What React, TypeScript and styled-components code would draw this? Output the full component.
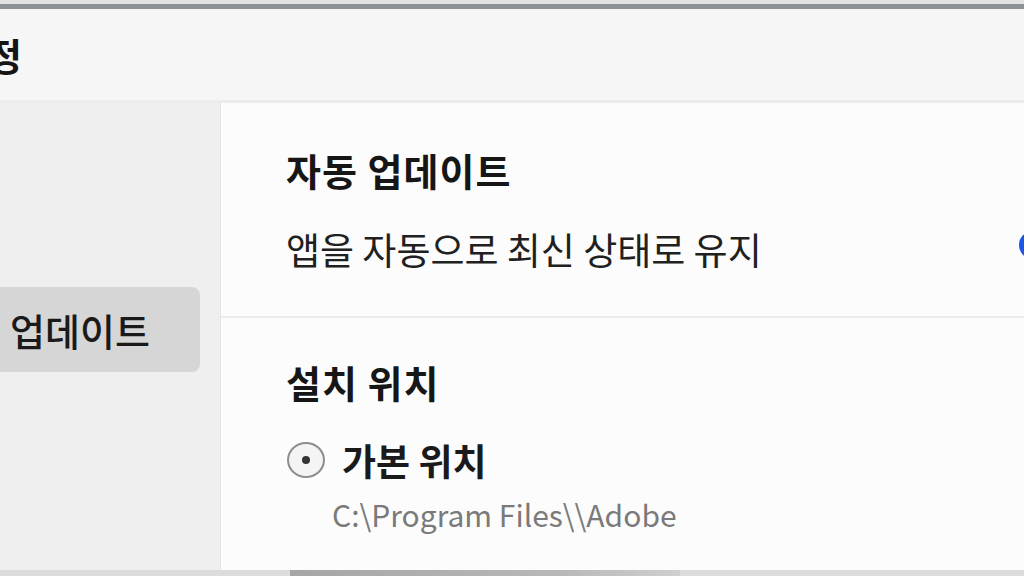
import React from "react"
import styled, { createGlobalStyle } from "styled-components"

const FONT = `"Noto Sans CJK KR", "Noto Sans", sans-serif`

const GlobalStyle = createGlobalStyle`
  html, body {
    margin: 0;
    padding: 0;
    width: 1024px;
    height: 576px;
    overflow: hidden;
    background: #e6e6e6;
  }
  body {
    font-family: ${FONT};
    color: #1c1c1c;
  }
`

const StyledWindow = styled.div`
  display: flex;
  flex-direction: column;
  width: 1193px;
  height: 576px;
  margin-left: -80px;
  background: #fcfcfc;
`

const StyledTopEdge = styled.div`
  height: 4px;
  background: #e2e3e4;
  border-bottom: 5px solid #8c9296;
`

const StyledTitleBar = styled.div`
  display: flex;
  align-items: center;
  height: 91px;
  padding-left: 32px;
  background: #f6f6f6;
  border-bottom: 3px solid #ececec;
`

const StyledTitle = styled.h1`
  margin: 0;
  font-size: 38px;
  font-weight: 700;
  line-height: 44px;
  color: #151515;
`

const StyledBody = styled.div`
  display: flex;
  flex: 1;
  min-height: 0;
`

const StyledSidebar = styled.nav`
  width: 300px;
  padding-top: 184px;
  background: #efefef;
  border-right: 1px solid #e4e4e4;
`

const StyledNavItem = styled.div<{ $active?: boolean }>`
  display: flex;
  align-items: center;
  width: 264px;
  height: 85px;
  margin-left: 16px;
  padding-left: 74px;
  box-sizing: border-box;
  border-radius: 8px;
  background: ${({ $active }) => ($active ? "#d6d6d6" : "transparent")};
  font-size: 38px;
  font-weight: 500;
  color: #1a1a1a;
`

const StyledMain = styled.main`
  display: flex;
  flex-direction: column;
  flex: 1;
  background: #fcfcfc;
`

const StyledSection = styled.section<{ $top: number; $bottom: number }>`
  display: flex;
  flex-direction: column;
  padding: ${({ $top }) => $top}px 40px ${({ $bottom }) => $bottom}px 65px;

  & + & {
    border-top: 2px solid #ececec;
  }
`

const StyledHeading = styled.h2`
  margin: 0;
  font-size: 38px;
  font-weight: 700;
  letter-spacing: 1px;
  line-height: 44px;
  color: #161616;
`

const StyledRow = styled.div<{ $gap: number }>`
  display: flex;
  align-items: center;
  justify-content: space-between;
  margin-top: ${({ $gap }) => $gap}px;
`

const StyledText = styled.div`
  font-size: 37px;
  font-weight: 400;
  line-height: 44px;
  color: #202020;
`

const StyledToggle = styled.div<{ $on: boolean }>`
  position: relative;
  width: 54px;
  height: 28px;
  margin-top: -8px;
  border-radius: 14px;
  background: ${({ $on }) => ($on ? "#1b57e6" : "#bbbbbb")};

  &::after {
    content: "";
    position: absolute;
    top: 5px;
    left: ${({ $on }) => ($on ? "31px" : "5px")};
    width: 18px;
    height: 18px;
    border-radius: 50%;
    background: #ffffff;
  }
`

const StyledRadioRow = styled.label`
  display: flex;
  align-items: center;
  gap: 17px;
  margin-top: 34px;
  padding-left: 1px;
  font-size: 37px;
  font-weight: 700;
  line-height: 44px;
  color: #1a1a1a;
`

const StyledRadio = styled.span<{ $checked: boolean }>`
  display: flex;
  align-items: center;
  justify-content: center;
  width: 38px;
  height: 36px;
  box-sizing: border-box;
  border: 2px solid #8e8e8e;
  border-radius: 50%;
  background: #f4f4f4;

  &::after {
    content: "";
    width: 8px;
    height: 8px;
    border-radius: 50%;
    background: ${({ $checked }) => ($checked ? "#333333" : "transparent")};
  }
`

const StyledPath = styled.div`
  margin-top: 14px;
  padding-left: 46px;
  font-size: 30px;
  line-height: 36px;
  color: #7a7a7a;
`

const StyledScrollTrack = styled.div`
  display: flex;
  height: 6px;
  background: #dcdcdc;
`

const StyledScrollThumb = styled.div`
  width: 390px;
  margin-left: 370px;
  background: linear-gradient(to right, #a6a6a6, #b8b8b8 70%, #d0d0d0);
`

export default function App() {
  return (
    <>
      <GlobalStyle />
      <StyledWindow>
        <StyledTopEdge />
        <StyledTitleBar>
          <StyledTitle>설정</StyledTitle>
        </StyledTitleBar>
        <StyledBody>
          <StyledSidebar>
            <StyledNavItem $active>업데이트</StyledNavItem>
          </StyledSidebar>
          <StyledMain>
            <StyledSection $top={45} $bottom={45}>
              <StyledHeading>자동 업데이트</StyledHeading>
              <StyledRow $gap={35}>
                <StyledText>앱을 자동으로 최신 상태로 유지</StyledText>
                <StyledToggle $on />
              </StyledRow>
            </StyledSection>
            <StyledSection $top={42} $bottom={0}>
              <StyledHeading>설치 위치</StyledHeading>
              <StyledRadioRow>
                <StyledRadio $checked />
                가본 위치
              </StyledRadioRow>
              <StyledPath>C:\Program Files\\Adobe</StyledPath>
            </StyledSection>
          </StyledMain>
        </StyledBody>
        <StyledScrollTrack>
          <StyledScrollThumb />
        </StyledScrollTrack>
      </StyledWindow>
    </>
  )
}
